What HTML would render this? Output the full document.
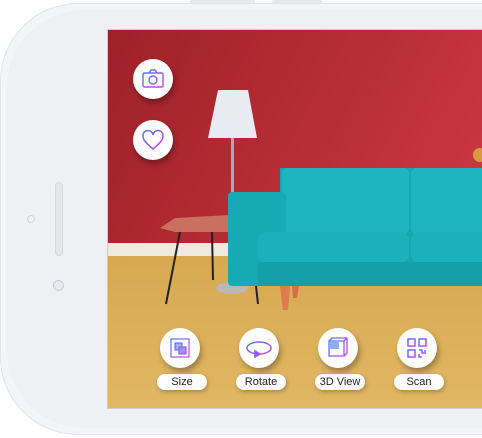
<!DOCTYPE html>
<html><head><style>
*{margin:0;padding:0;box-sizing:border-box}
html,body{width:482px;height:438px;overflow:hidden}
body{background:#fff;position:relative;font-family:"Liberation Sans",sans-serif}
.abs{position:absolute}
.phone{left:0;top:3px;width:482px;height:432px;background:#eef0f3;border-radius:78px 0 0 78px;border:1px solid #e2e4e8;border-right:none;box-shadow:inset 6px 6px 0 0 #f3f4f6,inset 6px -6px 0 0 #f3f4f6}
.screen{left:107px;top:29px;width:375px;height:380px;border:1px solid #c8cbd0;border-right:none;overflow:hidden;background:#a8252d}
.circ{width:40px;height:40px;border-radius:50%;background:#fff;box-shadow:2px 4px 6px rgba(0,0,0,.3);display:flex;align-items:center;justify-content:center}
.pill{width:50px;height:16px;border-radius:8px;background:#fff;font-size:11px;color:#222;text-align:center;line-height:16px;box-shadow:1px 2px 4px rgba(0,0,0,.25)}
</style></head><body>
<div class="abs" style="left:190px;top:0;width:65px;height:4px;background:#e6e8ec;border-radius:2px"></div>
<div class="abs" style="left:272px;top:0;width:50px;height:4px;background:#e6e8ec;border-radius:2px"></div>
<div class="abs phone"></div>
<div class="abs" style="left:55px;top:182px;width:8px;height:74px;border-radius:4px;background:#e4e6ea;border:1px solid #d6d8dc"></div>
<div class="abs" style="left:27px;top:215px;width:8px;height:8px;border-radius:50%;border:1px solid #d0d3d8"></div>
<div class="abs" style="left:53px;top:280px;width:11px;height:11px;border-radius:50%;border:1px solid #c8cbd0;background:#e8eaee"></div>
<div class="abs screen">
<svg width="375" height="380" viewBox="108 30 375 380" style="position:absolute;left:0;top:0">
<defs>
<linearGradient id="wall" x1="0" y1="0" x2="1" y2="0.3"><stop offset="0" stop-color="#9e2128"/><stop offset="1" stop-color="#c8363e"/></linearGradient>
<linearGradient id="fl" x1="0" y1="0" x2="0" y2="1"><stop offset="0" stop-color="#d7a850"/><stop offset="1" stop-color="#e2b865"/></linearGradient>
</defs>
<rect x="108" y="30" width="400" height="220" fill="url(#wall)"/>
<rect x="108" y="243" width="400" height="13" fill="#efe9e0"/>
<rect x="108" y="256" width="400" height="160" fill="url(#fl)"/>
<polygon points="218,90 248,90 257,138 208,138" fill="#e8ecf2"/>
<rect x="231" y="138" width="3" height="150" fill="#aaa"/>
<ellipse cx="232" cy="288" rx="16" ry="6" fill="#b8b8b8"/>
<polygon points="160,228 175,218 230,215 230,232 175,232" fill="#c87160"/>
<line x1="180" y1="232" x2="166" y2="304" stroke="#222" stroke-width="2"/>
<line x1="212" y1="232" x2="213" y2="280" stroke="#222" stroke-width="2"/>
<line x1="250" y1="232" x2="258" y2="304" stroke="#222" stroke-width="2"/>
<circle cx="480" cy="155" r="7" fill="#d89a40"/>
<rect x="280" y="168" width="230" height="96" fill="#17a5b0"/>
<rect x="282" y="168" width="127" height="66" rx="5" fill="#1fb5c0"/>
<rect x="411" y="168" width="100" height="66" rx="5" fill="#1fb5c0"/>
<rect x="228" y="192" width="58" height="94" rx="4" fill="#17a9b4"/>
<rect x="258" y="232" width="151" height="31" rx="8" fill="#1bb0bb"/>
<rect x="411" y="232" width="100" height="31" rx="8" fill="#1bb0bb"/>
<rect x="258" y="262" width="250" height="24" fill="#159fab"/>
<polygon points="280,286 290,286 288,310 283,310" fill="#e07a50"/>
<polygon points="292,286 299,286 297,298 293,298" fill="#d86e48"/>
</svg>
</div>
<div class="abs circ" style="left:133px;top:59px"><svg width="24" height="24" viewBox="0 0 24 24" fill="none" stroke="url(#ic2)" stroke-width="1.4"><defs><linearGradient id="ic2" x1="0" y1="0" x2="1" y2="1"><stop offset="0" stop-color="#4a7df0"/><stop offset="1" stop-color="#d040f0"/></linearGradient></defs><rect x="2" y="6" width="20" height="14" rx="1.5"/><path d="M8 6l2-3h4l2 3"/><circle cx="12" cy="13" r="4"/></svg></div>
<div class="abs circ" style="left:133px;top:120px"><svg width="24" height="24" viewBox="0 0 24 24" fill="none" stroke="url(#ic2)" stroke-width="1.5"><path d="M12 21C5 15 2 12 2 8a5 5 0 0 1 10-1 5 5 0 0 1 10 1c0 4-3 7-10 13z"/></svg></div>
<div class="abs circ" style="left:160px;top:328px"><svg width="24" height="24" viewBox="0 0 24 24" fill="none" stroke="url(#ic2)" stroke-width="1.2"><rect x="3" y="3" width="18" height="18"/><rect x="7" y="7" width="7" height="7" fill="#9ab4f4"/><rect x="11" y="11" width="7" height="7" fill="#b08af0"/></svg></div>
<div class="abs circ" style="left:239px;top:328px"><svg width="28" height="24" viewBox="0 0 28 24" fill="none" stroke="url(#ic2)" stroke-width="1.5"><ellipse cx="14" cy="12" rx="12" ry="6"/><path d="M10 15l5 3-5 3z" fill="#b050f0"/></svg></div>
<div class="abs circ" style="left:318px;top:328px"><svg width="24" height="24" viewBox="0 0 24 24" fill="none" stroke="url(#ic2)" stroke-width="1.3"><rect x="3" y="5" width="15" height="15"/><path d="M3 5l3-3h15v15l-3 3M18 5l3-3"/><rect x="4" y="6" width="9" height="7" fill="#8ab0f4" stroke="none"/></svg></div>
<div class="abs circ" style="left:397px;top:328px"><svg width="22" height="22" viewBox="0 0 22 22" fill="none" stroke="url(#ic2)" stroke-width="1.5"><rect x="2" y="2" width="7" height="7"/><rect x="13" y="2" width="7" height="7"/><rect x="2" y="13" width="7" height="7"/><path d="M13 13h3v3h4M13 17v3h3M19 13v2"/></svg></div>
<div class="abs pill" style="left:157px;top:374px">Size</div>
<div class="abs pill" style="left:236px;top:374px">Rotate</div>
<div class="abs pill" style="left:315px;top:374px">3D View</div>
<div class="abs pill" style="left:394px;top:374px">Scan</div>
</body></html>
